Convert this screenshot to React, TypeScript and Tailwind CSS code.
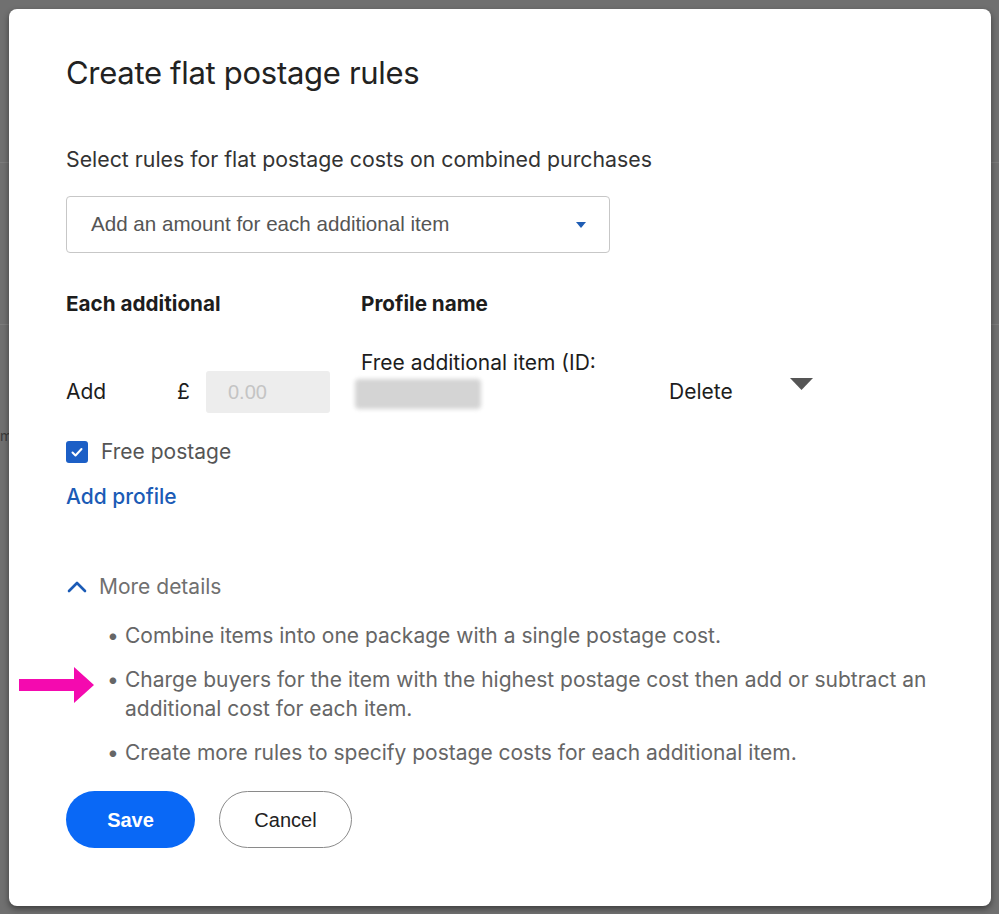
import React, { useState } from 'react';

const details = [
  'Combine items into one package with a single postage cost.',
  'Charge buyers for the item with the highest postage cost then add or subtract an additional cost for each item.',
  'Create more rules to specify postage costs for each additional item.',
];

const App: React.FC = () => {
  const [freePostage, setFreePostage] = useState(true);
  const [open, setOpen] = useState(true);

  return (
    <div className="relative w-[999px] h-[914px] overflow-hidden bg-[#707070] font-['Inter',sans-serif]">
      {/* page behind the overlay */}
      <div className="flex flex-col">
        <div className="h-[163px] border-b border-[#7c7c7c]" />
        <div className="h-[162px] border-b border-[#7c7c7c]" />
        <div className="h-[110px] pt-[100px] text-[14px] text-[#3a3a3a]">m</div>
      </div>

      <div className="absolute left-[9px] top-[9px] w-[982px] h-[897px] bg-white rounded-[8px] shadow-[0_3px_6px_rgba(0,0,0,0.45)] pl-[57px] pr-[40px] text-[#191919]">
        <h1 className="mt-[45px] text-[31px] leading-[38px] tracking-[-0.3px] text-[#222]">Create flat postage rules</h1>

        <p className="mt-[54px] text-[21.3px] leading-[26px] text-[#333]">Select rules for flat postage costs on combined purchases</p>

        <div className="mt-[24px] w-[544px] h-[57px] border border-[#c7c7c7] rounded-[4px] flex items-center justify-between pl-[24px] pr-[23px]">
          <span className="font-['Liberation_Sans',sans-serif] text-[20.6px] text-[#555]">Add an amount for each additional item</span>
          <svg width="10" height="6" viewBox="0 0 10 6"><path d="M0 0h10L5 6z" fill="#1f5db4" /></svg>
        </div>

        <div className="mt-[39px] flex text-[20.7px] font-bold leading-[24px] text-[#1d1d1d]">
          <div className="w-[295px]">Each additional</div>
          <div>Profile name</div>
        </div>

        <div className="mt-[34px] flex items-start text-[21px] leading-[26px] text-[#1d1d1d]">
          <div className="w-[111px] pt-[29px]">Add</div>
          <div className="w-[29px] pt-[29px]">£</div>
          <div className="mt-[21px] w-[124px] h-[42px] bg-[#ededed] rounded-[3px] flex items-center pl-[22px] text-[#c4c4c4] font-['Liberation_Sans',sans-serif] text-[20px]">0.00</div>
          <div className="ml-[31px] w-[308px] flex flex-col">
            <span>Free additional item (ID:</span>
            <span className="mt-[3px] -ml-[6px] w-[126px] h-[30px] rounded-[4px] bg-[#d4d4d4] blur-[2px]" />
          </div>
          <div className="w-[121px] pt-[29px]">Delete</div>
          <svg className="mt-[28px]" width="23" height="12" viewBox="0 0 23 12"><path d="M0 0h23L11.5 12z" fill="#555" /></svg>
        </div>

        <label className="mt-[26px] flex items-center gap-[13px] cursor-pointer">
          <button
            onClick={() => setFreePostage(!freePostage)}
            className={`w-[22px] h-[22px] rounded-[3px] flex items-center justify-center ${freePostage ? 'bg-[#1c5fc6]' : 'border-2 border-[#888]'}`}
          >
            {freePostage && (
              <svg width="14" height="14" viewBox="0 0 14 14"><path d="M2.5 7.5l3 3 6-6.5" fill="none" stroke="#fff" strokeWidth="2" strokeLinecap="round" strokeLinejoin="round" /></svg>
            )}
          </button>
          <span className="text-[21px] leading-[26px] text-[#555]">Free postage</span>
        </label>

        <a href="#" className="mt-[19px] block w-fit text-[21px] leading-[26px] font-medium text-[#1b5bb6]">Add profile</a>

        <button onClick={() => setOpen(!open)} className="mt-[64px] flex items-center gap-[11px] text-[21px] leading-[26px] text-[#707070]">
          <svg width="22" height="14" viewBox="0 0 22 14">
            <path d="M3 11L11 3l8 8" fill="none" stroke="#1b5bb6" strokeWidth="2.6" strokeLinecap="round" strokeLinejoin="round" />
          </svg>
          More details
        </button>

        <ul className="mt-[21px] ml-[41px] flex flex-col gap-[15px] text-[21px] leading-[29px] text-[#666]">
          {open && details.map((d, i) => (
            <li key={i} className="relative flex">
              <span className="w-[18px] shrink-0">•</span>
              <span className="max-w-[820px]">{d}</span>
              {i === 1 && (
                <svg className="absolute left-[-88px] top-[2px]" width="75" height="36" viewBox="0 0 75 36">
                  <path d="M0 12h55V0l20 18-20 18V24H0z" fill="#f40aaf" />
                </svg>
              )}
            </li>
          ))}
        </ul>

        <div className="mt-[24px] flex gap-[24px]">
          <button className="w-[129px] h-[57px] rounded-full bg-[#0968f6] text-white text-[20px] font-bold font-['Liberation_Sans',sans-serif]">Save</button>
          <button className="w-[133px] h-[57px] rounded-full border border-[#8a8a8a] bg-white text-[#222] text-[20px] font-['Liberation_Sans',sans-serif]">Cancel</button>
        </div>
      </div>
    </div>
  );
};

export default App;
